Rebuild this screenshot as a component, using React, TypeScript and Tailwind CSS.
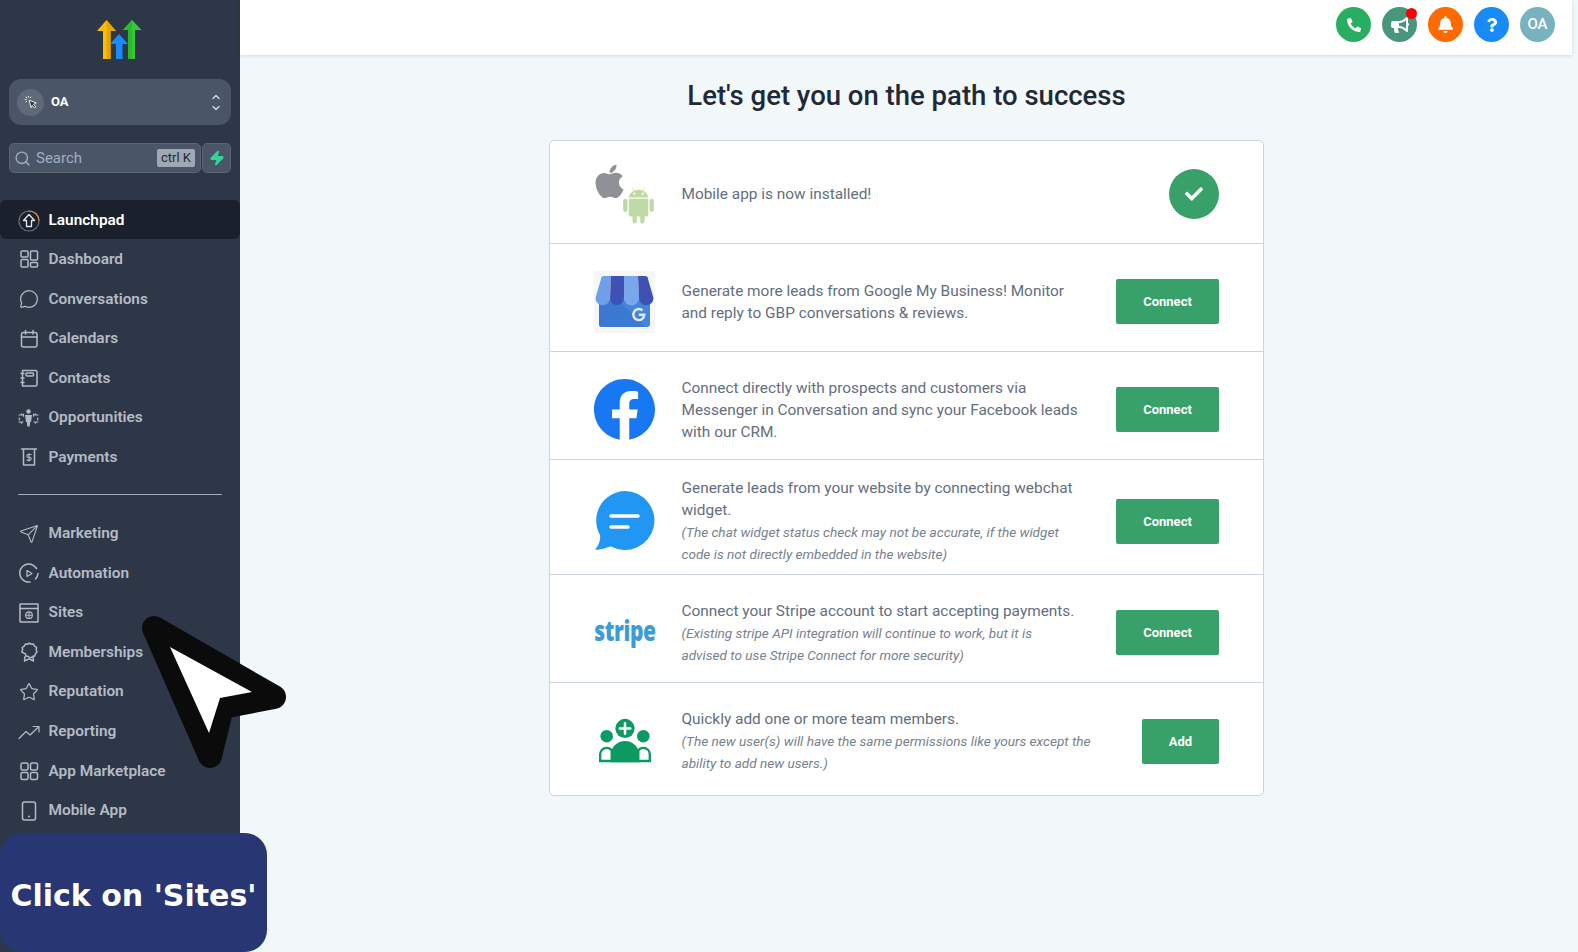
import type { ReactNode } from 'react';
import { AiFillAndroid, AiFillApple } from 'react-icons/ai';
import { FaBell, FaBullhorn, FaCheck, FaFacebook, FaPhoneAlt, FaQuestion } from 'react-icons/fa';
import { ChevronDown, ChevronUp, MessageCircle, Search, Send, Star, Zap } from 'lucide-react';

const stroke = { fill: 'none', stroke: 'currentColor', strokeWidth: 1.5, strokeLinecap: 'round', strokeLinejoin: 'round' } as const;

const Ico = ({ children }: { children: ReactNode }) => (
  <svg viewBox="0 0 20 20" className="w-5 h-5" {...stroke}>
    {children}
  </svg>
);

const LaunchpadIcon = () => (
  <svg viewBox="0 0 22 22" className="w-[22px] h-[22px]" fill="none" strokeLinecap="round" strokeLinejoin="round">
    <circle cx="11" cy="11" r="10" stroke="#6b7280" strokeWidth="1.2" />
    <path d="M11 1a10 10 0 0 1 10 9" stroke="#ed8936" strokeWidth="1.2" />
    <path d="M11 4.500 5.500 10.500h3v6h5v-6h3z" stroke="#e2e8f0" strokeWidth="1.3" />
  </svg>
);

const nav1 = [
  { label: 'Dashboard', icon: <Ico><rect x="2" y="2" width="7" height="6" rx="1" /><rect x="2" y="10.5" width="7" height="7.5" rx="1" /><rect x="11.5" y="2" width="7" height="9" rx="1" /><rect x="11.5" y="13.5" width="7" height="4.5" rx="1" /></Ico> },
  { label: 'Conversations', icon: <MessageCircle className="w-5 h-5" strokeWidth={1.5} /> },
  { label: 'Calendars', icon: <Ico><rect x="2.5" y="3.5" width="15.5" height="14.5" rx="2" /><path d="M2.5 8h15.5M6.5 1.5v3.5M14 1.5v3.5" /></Ico> },
  { label: 'Contacts', icon: <Ico><path d="M3.5 2.5h13a1.5 1.5 0 0 1 1.5 1.500v12.500a1.500 1.500 0 0 1-1.500 1.500h-13z" /><rect x="7" y="5" width="7.500" height="3" rx="1" /><path d="M2 5.500h3M2 10h3M2 14.500h3" /></Ico> },
  {
    label: 'Opportunities',
    icon: (
      <svg viewBox="0 0 20 20" className="w-[21px] h-5 -ml-[1px]" fill="currentColor">
        <circle cx="10" cy="3.500" r="2.200" />
        <path d="M6.500 7h7l-1 7h-.8l-.5 4.500h-2.400l-.5-4.500h-.8z" />
        <path d="M.5 7h3.500l-1.200-1.200M5 6v2.200M.5 14H4l-1.200 1.200M19.500 7H16l1.200-1.200M15 6v2.200M19.500 14H16l1.200 1.200M.8 10v2M19.200 10v2" fill="none" stroke="currentColor" strokeWidth="1.200" strokeLinecap="round" />
      </svg>
    ),
  },
  { label: 'Payments', icon: <Ico><path d="M2.500 2h15M4.500 2v16h11V2" /><path d="M12.200 7.500H9.200a1.300 1.300 0 0 0 0 2.800h1.600a1.300 1.300 0 0 1 0 2.800H7.900M10 6.500v7.700" strokeWidth="1.100" /></Ico> },
];

const nav2 = [
  { label: 'Marketing', icon: <Send className="w-5 h-5" strokeWidth={1.3} /> },
  { label: 'Automation', icon: <Ico><path d="M17.500 5.500A9 9 0 1 0 11 19" /><path d="M19 10.500a9 9 0 0 1-2.500 5.500" /><path d="M8 7.500 13 10.500 8 13.500z" strokeWidth="1.200" /></Ico> },
  { label: 'Sites', icon: <Ico><rect x="1" y="1" width="18" height="18" rx="0.5" /><path d="M1 5.500h18" /><circle cx="10" cy="12.200" r="3.300" strokeWidth="1.200" /><path d="M6.700 12.200h6.600M10 9v6.500" strokeWidth="1.100" /></Ico> },
  {
    label: 'Memberships',
    icon: (
      <Ico>
        <path d="M10 1l2 1.200 2.400-.2 1.100 2.100 2 1.300-.3 2.400.8 2.200-1.600 1.800-.6 2.300-2.400.5-2 1.400-2-1.400-2.400-.5-.6-2.300L2.800 10l.8-2.200-.3-2.400 2-1.300L6.400 2l2.400.2z" />
        <path d="M6 14.500 5.500 19 10 16.800 14.500 19 14 14.500" />
      </Ico>
    ),
  },
  { label: 'Reputation', icon: <Star className="w-5 h-5" strokeWidth={1.5} /> },
  { label: 'Reporting', icon: <svg viewBox="0 0 22 20" className="w-[22px] h-5 -ml-[1px]" {...stroke} strokeWidth={1.200}><path d="M1 16.500 8 9.500l4 3.500L20.500 5M15 4.500h6v5.500" /></svg> },
  { label: 'App Marketplace', icon: <Ico><rect x="2" y="2" width="7" height="7" rx="1.500" /><rect x="11.500" y="2" width="7" height="7" rx="1.500" /><rect x="2" y="11.500" width="7" height="7" rx="1.500" /><rect x="11.500" y="11.500" width="7" height="7" rx="1.500" /></Ico> },
  { label: 'Mobile App', icon: <Ico><rect x="3.500" y="1" width="13" height="18" rx="2" /><path d="M10 15.500h.01" strokeWidth="2" /></Ico> },
];

const NavRow = ({ label, icon }: { label: string; icon: ReactNode }) => (
  <div className="h-[39.6px] flex items-center pl-[19px] text-[15.4px] font-semibold text-[#b5bbc5]">
    <span className="w-[29.5px] shrink-0 flex">{icon}</span>
    {label}
  </div>
);

const GbpLogo = () => (
  <div className="w-[61px] h-[62px] bg-[#f6f6f6] flex items-center justify-center">
    <svg viewBox="0 0 61 62" className="w-[61px] h-[62px]">
      <path d="M5 28h51v25a3 3 0 0 1-3 3H8a3 3 0 0 1-3-3z" fill="#4285dc" />
      <path d="M5 28h18l28 28H8a3 3 0 0 1-3-3z" fill="#3b78cf" />
      <path d="M10 5h7l-1 22a7 7 0 0 1-14.500 0L7 8a3 3 0 0 1 3-3z" fill="#6f9fe8" />
      <path d="M17 5h13v22a6.500 6.500 0 0 1-14 0z" fill="#3f51b5" />
      <path d="M30 5h14l1 22a7.500 7.500 0 0 1-15 0z" fill="#7aa7ec" />
      <path d="M44 5h7a3 3 0 0 1 3 3l5.500 19a7.200 7.200 0 0 1-14.500 0z" fill="#3f51b5" />
      <path d="M48.500 39.500a5.500 5.500 0 1 0 1.800 4.200h-5.500" fill="none" stroke="#e8eaf6" strokeWidth="2.400" />
    </svg>
  </div>
);

const ChatLogo = () => (
  <svg viewBox="0 0 61 62" className="w-[61px] h-[62px]">
    <path d="M31 1a29.500 29.500 0 1 1-14 55.500c-5 1-11 4-16 3 3-3 6-9 5-14.500A29.500 29.500 0 0 1 31 1z" fill="#2196f3" />
    <path d="M17 26h27M17 37h17" stroke="#fff" strokeWidth="3.500" strokeLinecap="round" fill="none" />
  </svg>
);

const TeamLogo = () => (
  <svg viewBox="0 0 56 46" className="w-[54px] h-[46px]" fill="#0a9a62">
    <circle cx="28" cy="10" r="10" />
    <path d="M28 4.500v11M22.500 10h11" stroke="#fff" strokeWidth="2.600" strokeLinecap="round" />
    <circle cx="9" cy="18" r="6.500" />
    <circle cx="47" cy="18" r="6.500" />
    <path d="M1 45V37a8 8 0 0 1 8-8 8 8 0 0 1 8 8v5.500h22V37a8 8 0 0 1 8-8 8 8 0 0 1 8 8v8z" />
    <path d="M13 45V38a15 15 0 0 1 30 0v7z" />
    <path d="M3.500 42.500V37a5.500 5.500 0 0 1 9.500-4v9.500zM52.500 42.500V37a5.500 5.500 0 0 0-9.500-4v9.500z" fill="#fff" />
  </svg>
);

const Btn = ({ label, w }: { label: string; w: string }) => (
  <button className={`${w} h-[45px] pt-[1px] shrink-0 rounded-[2px] bg-[#38a169] text-white text-[13px] font-bold`}>{label}</button>
);

const Note = ({ children }: { children: ReactNode }) => <p className="italic text-[13.6px] leading-[22px] text-[#77818f]">{children}</p>;

const Row = ({ h, logo, children, action, last }: { h: string; logo: ReactNode; children: ReactNode; action: ReactNode; last?: boolean }) => (
  <div className={`${h} flex items-center pl-[44px] pr-[44px] ${last ? '' : 'border-b border-[#cbd5e0]'}`}>
    <div className="w-[61px] shrink-0 flex justify-center">{logo}</div>
    <div className="flex-1 pl-[26.5px] pr-[36px] text-[15.4px] leading-[22px] text-[#636e7e]">{children}</div>
    {action}
  </div>
);

const Round = ({ bg, children }: { bg: string; children: ReactNode }) => (
  <div className={`relative w-[35px] h-[35px] rounded-full flex items-center justify-center text-white ${bg}`}>{children}</div>
);

export default function App() {
  return (
    <div className="relative flex w-[1578px] h-[952px] overflow-hidden bg-[#f2f7fa] font-['Roboto',sans-serif]">
      <aside className="w-[240px] shrink-0 h-full bg-[#2d3748]">
        <div className="h-[79px] flex justify-center pt-[20px]">
          <svg width="46" height="40" viewBox="0 0 46 40">
            <path d="M0 11 9.500 0 19 11h-5.500v28H6V11z" fill="#ffbc00" />
            <path d="M9.500 0 19 11h-5.500v28H9.500z" fill="#e6a800" />
            <path d="M13 24 22 14l9 10h-5.500v15H19V24z" fill="#188bf6" />
            <path d="M26 10 35 0l9.500 10H38v29h-7V10z" fill="#37ca37" />
            <path d="M35 0 26 10h5v29h4z" fill="#2fb82f" />
          </svg>
        </div>
        <div className="mx-[9px] h-[46px] rounded-[12px] bg-[#4a5568] flex items-center pl-[8px] pr-[9px]">
          <div className="w-[27px] h-[27px] rounded-full bg-[#5f6977] flex items-center justify-center">
            <svg viewBox="0 0 16 16" className="w-[14px] h-[14px]" fill="#2d3748" stroke="#fff" strokeWidth="1" strokeLinejoin="round">
              <path d="M6 6 14 9 11 10.500 13.500 13.500 12 15 9.500 12 8 14.500z" />
              <path d="M1 5h2M5 1v2M2 2l1.500 1.500M8 2 7 3.500M2 8l1.500-1" fill="none" />
            </svg>
          </div>
          <span className="ml-[7px] flex-1 text-white text-[13px] font-bold">OA</span>
          <div className="flex flex-col text-[#cbd5e0] -space-y-[1px]">
            <ChevronUp className="w-[12px] h-[12px]" strokeWidth={3} />
            <ChevronDown className="w-[12px] h-[12px]" strokeWidth={3} />
          </div>
        </div>
        <div className="mx-[9px] mt-[18px] flex gap-[1px] h-[30px]">
          <div className="w-[192px] rounded-[5px] bg-[#4a5568] border border-[#5b6675] flex items-center pl-[4px] pr-[5px]">
            <Search className="w-[17px] h-[17px] text-[#a0aec0]" strokeWidth={2} />
            <span className="ml-[5px] flex-1 text-[15px] text-[#a0aec0]">Search</span>
            <span className="h-[18px] px-[4px] rounded-[2px] bg-[#a0a8b4] text-[#1f2937] text-[13px] leading-[18px]">ctrl K</span>
          </div>
          <div className="w-[29px] rounded-[5px] bg-[#4a5568] border border-[#5b6675] flex items-center justify-center">
            <Zap className="w-[16px] h-[16px] text-[#34d399]" fill="#34d399" />
          </div>
        </div>
        <div className="mt-[27px] h-[39px] rounded-[6px] bg-[#1a202c] flex items-center pl-[18px] pt-[2px] text-[15.4px] font-semibold text-white">
          <span className="w-[30.5px] shrink-0 flex"><LaunchpadIcon /></span>
          Launchpad
        </div>
        <div className="pt-[0.7px]">
          {nav1.map((n) => <NavRow key={n.label} {...n} />)}
          <div className="mx-[18px] mt-[16.5px] mb-[19px] h-px bg-[#a0aec0]" />
          {nav2.map((n) => <NavRow key={n.label} {...n} />)}
        </div>
      </aside>

      <main className="flex-1 min-w-0">
        <header className="mr-[6px] h-[55px] pb-[6px] bg-white shadow-[0_1px_4px_rgba(0,0,0,0.12)] flex items-center justify-end pr-[17px] gap-[11px]">
          <Round bg="bg-[#27ae60]"><FaPhoneAlt className="w-[14px] h-[14px]" /></Round>
          <Round bg="bg-[#48967e]">
            <FaBullhorn className="w-[18px] h-[18px]" />
            <span className="absolute top-[1px] right-0 w-[11px] h-[11px] rounded-full bg-[#ff0000]" />
          </Round>
          <Round bg="bg-[#ff6a00]"><FaBell className="w-[17px] h-[17px]" /></Round>
          <Round bg="bg-[#188bf6]"><FaQuestion className="w-[14px] h-[14px]" /></Round>
          <Round bg="bg-[#79b2bf]"><span className="text-[15px] font-medium">OA</span></Round>
        </header>

        <div className="w-[715px] ml-[309px]">
          <h1 className="mt-[23px] h-[41px] text-center text-[27.5px] leading-[36px] font-medium text-[#1f2937]">Let's get you on the path to success</h1>
          <div className="mt-[21px] rounded-[5px] border border-[#cbd5e0] bg-white">
            <Row
              h="h-[103px] pt-[4px]"
              logo={
                <div className="relative w-[61px] h-[60px]">
                  <AiFillApple className="absolute -left-[5px] -top-[3px] w-[41px] h-[41px] text-[#8e9196]" />
                  <AiFillAndroid className="absolute -right-[4px] -bottom-[2px] w-[41px] h-[41px] text-[#bfdba5]" />
                </div>
              }
              action={
                <div className="w-[50px] h-[50px] rounded-full bg-[#38a169] flex items-center justify-center text-white">
                  <FaCheck className="w-[18px] h-[18px]" />
                </div>
              }
            >
              Mobile app is now installed!
            </Row>
            <Row h="h-[108px] pt-[8px]" logo={<GbpLogo />} action={<Btn label="Connect" w="w-[103px]" />}>
              Generate more leads from Google My Business! Monitor and reply to GBP conversations &amp; reviews.
            </Row>
            <Row h="h-[108px] pt-[8px]" logo={<FaFacebook className="w-[63px] h-[63px] shrink-0 text-[#1877f2]" />} action={<Btn label="Connect" w="w-[103px]" />}>
              Connect directly with prospects and customers via Messenger in Conversation and sync your Facebook leads with our CRM.
            </Row>
            <Row h="h-[115px] pt-[8px]" logo={<ChatLogo />} action={<Btn label="Connect" w="w-[103px]" />}>
              Generate leads from your website by connecting webchat widget.
              <Note>(The chat widget status check may not be accurate, if the widget code is not directly embedded in the website)</Note>
            </Row>
            <Row
              h="h-[108px] pt-[8px]"
              logo={<span className="font-['Open_Sans',sans-serif] font-extrabold text-[28px] leading-none tracking-[-0.5px] text-[#3d9bd8] scale-x-[0.75] -mt-[5px] whitespace-nowrap">stripe</span>}
              action={<Btn label="Connect" w="w-[103px]" />}
            >
              Connect your Stripe account to start accepting payments.
              <Note>(Existing stripe API integration will continue to work, but it is advised to use Stripe Connect for more security)</Note>
            </Row>
            <Row h="h-[112px] pt-[4px]" last logo={<TeamLogo />} action={<Btn label="Add" w="w-[77px]" />}>
              Quickly add one or more team members.
              <Note>(The new user(s) will have the same permissions like yours except the ability to add new users.)</Note>
            </Row>
          </div>
        </div>
      </main>

      {/* tutorial overlay: pointer + caption */}
      <svg className="absolute left-0 top-0 pointer-events-none" width="300" height="790" viewBox="0 0 300 790">
        <path d="M154 628 274 697 222 707 210 756z" fill="#0b0b0b" stroke="#0b0b0b" strokeWidth="24" strokeLinejoin="round" />
        <path d="M170 647 252 692 220 698 209 733z" fill="#fff" />
      </svg>
      <div className="absolute left-0 top-[833px] w-[267px] h-[119px] pt-[5px] rounded-[22px] bg-[#283673] flex items-center justify-center text-white text-[30px] font-bold font-['DejaVu_Sans',sans-serif] whitespace-nowrap">
        Click on 'Sites'
      </div>
    </div>
  );
}
